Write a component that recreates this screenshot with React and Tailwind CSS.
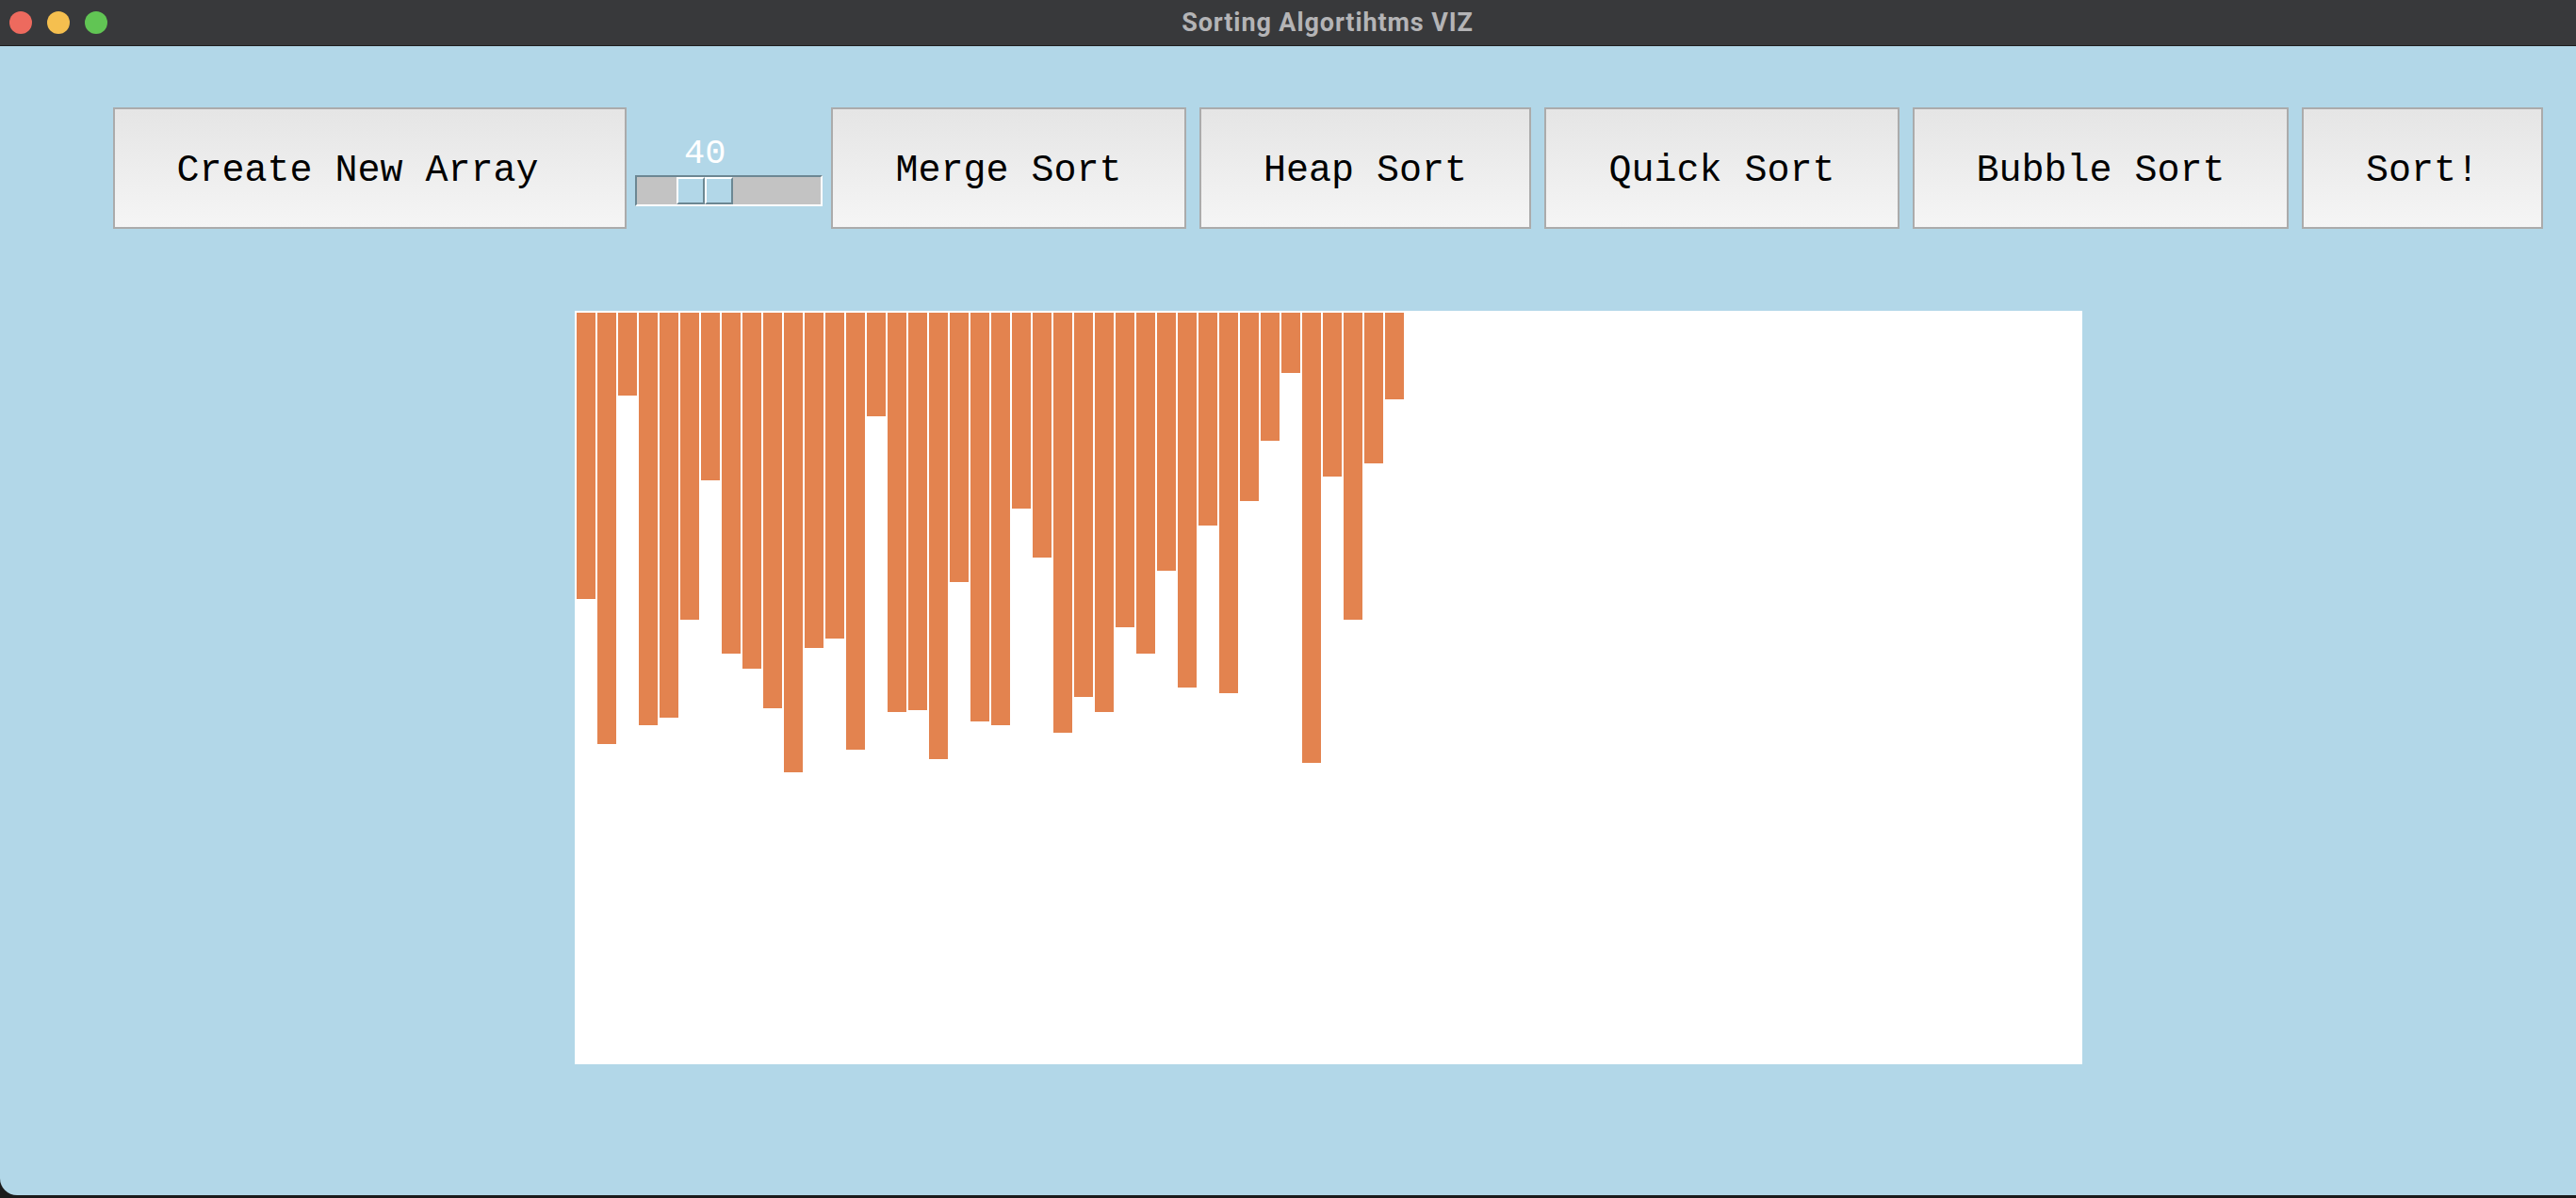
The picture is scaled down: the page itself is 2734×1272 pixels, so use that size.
import React from "react";

const heights = [
  304, 458, 88, 438, 430, 326, 178, 362, 378, 420, 488, 356, 346, 464, 110,
  424, 422, 474, 286, 434, 438, 208, 260, 446, 408, 424, 334, 362, 274, 398,
  226, 404, 200, 136, 64, 478, 174, 326, 160, 92,
];

const mono = { fontFamily: '"Liberation Mono", "Courier New", monospace' };

function TkButton({ label, width, extra = "" }) {
  return (
    <button
      className={`${width} ${extra} h-[129px] shrink-0 pt-[6px] border-2 border-[#ababab] bg-gradient-to-b from-[#e5e5e5] to-[#f5f5f5] text-[40px] leading-none text-black`}
      style={mono}
    >
      {label}
    </button>
  );
}

function SizeScale() {
  return (
    <div className="w-[217px] shrink-0 flex flex-col">
      <div className="h-[72px] flex items-end pb-[4px] pl-[61px] text-[37px] leading-none text-white" style={mono}>
        40
      </div>
      <div className="ml-[9px] w-[199px] h-[33px] flex border-t-2 border-l-2 border-b-2 border-r-2 border-t-[#6c8793] border-l-[#6c8793] border-b-white border-r-white bg-[#c3c3c3]">
        <div className="w-[42px]" />
        <div className="flex h-full">
          <div className="w-[30px] h-full bg-[#b2d7e8] border-t-2 border-l-2 border-b-2 border-r-2 border-t-white border-l-white border-b-[#6c8793] border-r-[#6c8793]" />
          <div className="w-[30px] h-full bg-[#b2d7e8] border-t-2 border-l-2 border-b-2 border-r-2 border-t-white border-l-white border-b-[#6c8793] border-r-[#6c8793]" />
        </div>
      </div>
    </div>
  );
}

export default function App() {
  return (
    <div className="w-[2734px] h-[1272px] flex flex-col bg-[#1b1b1b] overflow-hidden">
      {/* title bar */}
      <div className="h-[49px] shrink-0 flex items-center bg-[#38393b] border-b border-[#1e1e1e]">
        <div className="w-[114px] shrink-0 flex items-center gap-[16px] pl-[10px]">
          <span className="w-[24px] h-[24px] rounded-full bg-[#ed6a5e]" />
          <span className="w-[24px] h-[24px] rounded-full bg-[#f5bf4f]" />
          <span className="w-[24px] h-[24px] rounded-full bg-[#61c554]" />
        </div>
        <div
          className="flex-1 pr-[30px] text-center text-[27px] font-bold tracking-[0.9px] text-[#b4b4b6]"
          style={{ fontFamily: "Roboto, Inter, sans-serif" }}
        >
          Sorting Algortihtms VIZ
        </div>
      </div>

      {/* window body */}
      <div className="h-[1220px] shrink-0 bg-[#b2d7e8] rounded-bl-[18px] flex flex-col">
        <div className="flex items-start pt-[65px] pl-[120px]">
          <TkButton label="Create New Array" width="w-[545px]" extra="pr-[26px]" />
          <SizeScale />
          <div className="flex gap-[14px]">
            <TkButton label="Merge Sort" width="w-[377px]" />
            <TkButton label="Heap Sort" width="w-[352px]" />
            <TkButton label="Quick Sort" width="w-[377px]" />
            <TkButton label="Bubble Sort" width="w-[399px]" />
            <TkButton label="Sort!" width="w-[256px]" />
          </div>
        </div>

        <div className="mt-[87px] ml-[610px] w-[1600px] h-[800px] bg-white flex items-start gap-[2px] pt-[2px] pl-[2px]">
          {heights.map((h, i) => (
            <div key={i} className="w-[20px] shrink-0 bg-[#e3834f]" style={{ height: h }} />
          ))}
        </div>
      </div>
    </div>
  );
}
